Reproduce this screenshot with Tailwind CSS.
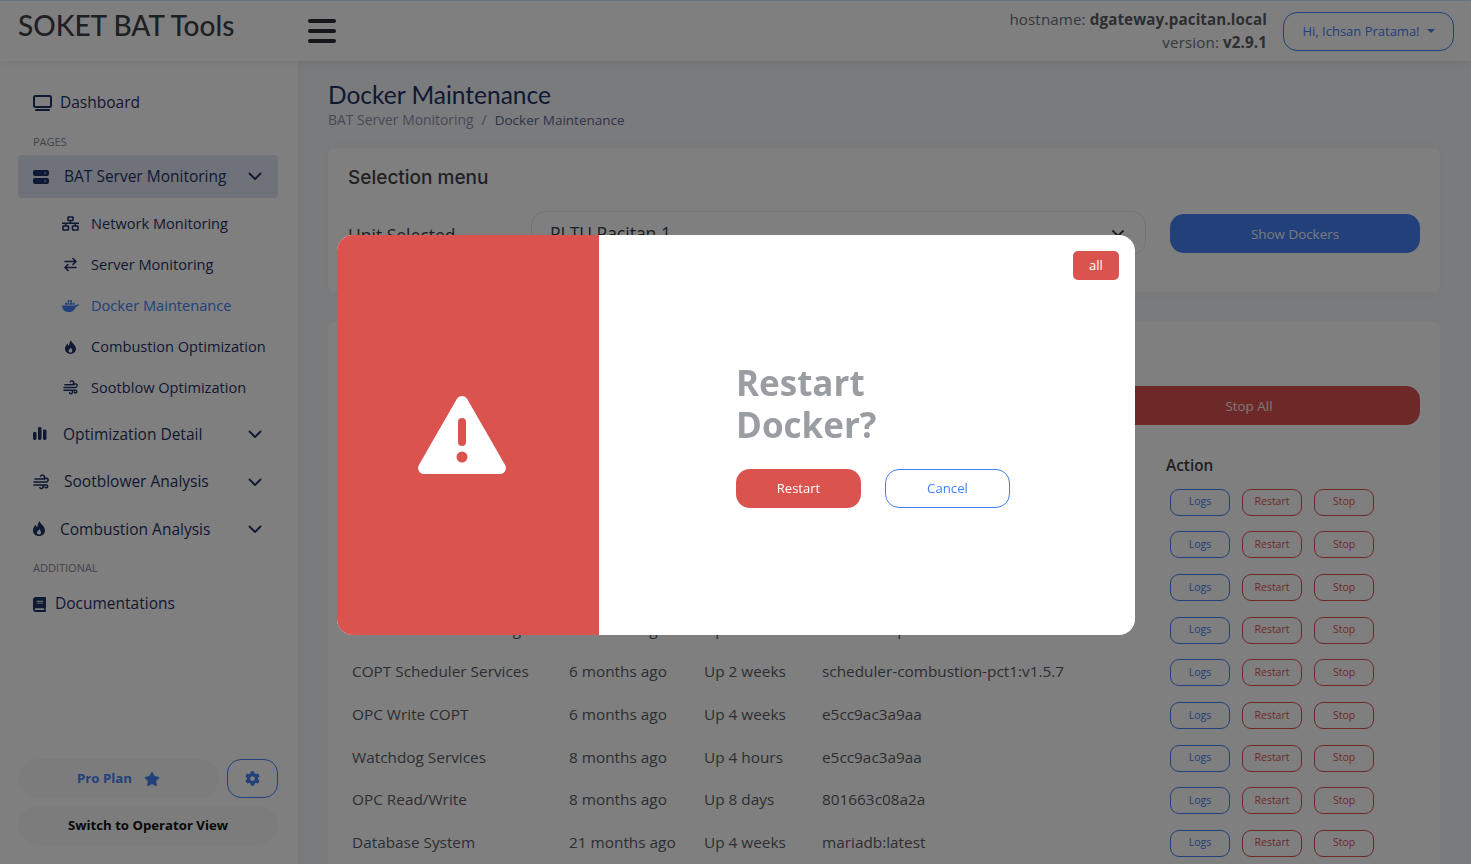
<!doctype html>
<html>
<head>
<meta charset="utf-8">
<script src="https://cdn.jsdelivr.net/npm/@tailwindcss/browser@4"></script>
<title>Docker Maintenance</title>
</head>
<body class="font-['Open_Sans',sans-serif] bg-[#f4f6fa] text-[#3a3b45]">
<div class="h-[864px] w-[1471px] overflow-hidden flex flex-col">
  <header class="h-[61px] shrink-0 bg-white border-t border-[#d7e6f5] flex items-center shadow-[0_2px_10px_rgba(0,0,0,0.08)] relative z-10">
    <div class="w-[298px] pl-[18px] font-['Lato',sans-serif] text-[28px] font-medium text-[#3f4146] leading-none pb-[12px]">SOKET BAT Tools</div>
    <button class="w-[28px] ml-[10px] flex flex-col gap-[6px] -mt-[1px]">
      <span class="h-[4px] rounded bg-[#2b2d33] block"></span>
      <span class="h-[4px] rounded bg-[#2b2d33] block"></span>
      <span class="h-[4px] rounded bg-[#2b2d33] block"></span>
    </button>
    <div class="ml-auto text-right text-[15.200px] leading-[23px] text-[#6d7077] -mt-[1px] tracking-[0.1px]">
      <div>hostname: <b class="font-bold text-[#5a5c63]">dgateway.pacitan.local</b></div>
      <div>version: <b class="font-bold text-[#5a5c63]">v2.9.1</b></div>
    </div>
    <button class="ml-[16px] mr-[17px] w-[171px] h-[39px] border border-[#4480f4] rounded-[14px] text-[#4480f4] text-[13px] flex items-center justify-center gap-[7px] mt-[1px] pt-[1px]">
      Hi, Ichsan Pratama!
      <span class="w-0 h-0 border-x-[4px] border-x-transparent border-t-[4px] border-t-[#4480f4] -mt-[3px]"></span>
    </button>
  </header>

  <div class="flex flex-1 min-h-0">
    <aside class="w-[298px] shrink-0 bg-white pl-[18px] pr-[20px] flex flex-col text-[#1f3266] shadow-[2px_0_8px_rgba(0,0,0,0.04)]">
      <a class="mt-[28px] h-[28px] pl-[15px] flex items-center gap-[8px] text-[15.500px]">
        <svg class="w-[19px] h-[16px]" viewBox="0 0 19 16" fill="none"><rect x="1" y="1" width="17" height="11" rx="1.500" stroke="#1f3266" stroke-width="2"/><path d="M3 15h13" stroke="#1f3266" stroke-width="2" stroke-linecap="round"/></svg>
        Dashboard
      </a>
      <div class="mt-[17px] h-[16px] pl-[15px] text-[11px] leading-[16px] text-[#858796] font-medium">PAGES</div>
      <a class="mt-[5px] h-[43px] rounded-[4px] bg-[#dfe6f3] pl-[15px] pr-[16px] flex items-center text-[15.500px]">
        <svg class="w-[16px] h-[14px] mr-[15px]" viewBox="0 0 16 14" fill="#1f3266"><path fill-rule="evenodd" d="M2 0h12a2 2 0 0 1 2 2v2a2 2 0 0 1-2 2H2a2 2 0 0 1-2-2V2a2 2 0 0 1 2-2zm0 8h12a2 2 0 0 1 2 2v2a2 2 0 0 1-2 2H2a2 2 0 0 1-2-2v-2a2 2 0 0 1 2-2zm10-5.800a.8.8 0 1 0 0 1.600.8.8 0 0 0 0-1.600zm0 8a.8.8 0 1 0 0 1.600.8.8 0 0 0 0-1.600z"/></svg>
        BAT Server Monitoring
        <svg class="ml-auto w-[14px] h-[9px]" viewBox="0 0 14 9" fill="none"><path d="M1.500 1.500L7 7l5.500-5.500" stroke="#1f3266" stroke-width="1.800" stroke-linecap="round" stroke-linejoin="round"/></svg>
      </a>
      <div class="text-[14.600px] mt-[5px]">
        <a class="h-[41px] flex items-center pl-[44px] gap-[12px]">
          <svg class="w-[17px] h-[15px]" viewBox="0 0 17 15" fill="none" stroke="#1f3266" stroke-width="1.600"><rect x="6" y="1" width="5" height="3.500" rx=".5"/><rect x="1" y="10" width="5.500" height="4" rx=".5"/><rect x="10.500" y="10" width="5.500" height="4" rx=".5"/><path d="M0 7.200h17M8.500 4.500v2.700M3.700 7.200v2.800M13.300 7.200v2.800"/></svg>
          Network Monitoring
        </a>
        <a class="h-[41px] flex items-center pl-[45px] gap-[12px]">
          <svg class="w-[15px] h-[15px] mr-[1px]" viewBox="0 0 15 15" fill="none" stroke="#1f3266" stroke-width="1.600" stroke-linecap="round" stroke-linejoin="round"><path d="M2 4.500h11M10 1.500l3 3-3 3M13 10.500H2M5 7.500l-3 3 3 3"/></svg>
          Server Monitoring
        </a>
        <a class="h-[41px] flex items-center pl-[44px] gap-[12px] text-[#4480f4] font-medium">
          <svg class="w-[17px] h-[13px]" viewBox="0 0 17 13" fill="#4480f4"><path d="M0 6.500h13.400c.4-.9 1.600-1.300 3.600-.9-.5 1.500-1.700 2.100-3 2.100-1 2.900-3.300 5.300-7.500 5.300C2.600 13 .3 10.500 0 6.500z"/><path d="M3 3.700h2v2H3zM5.500 3.700h2v2h-2zM8 3.700h2v2H8zM5.500 1.200h2v2h-2zM8 1.200h2v2H8zM10.500 3.700h2v2h-2z"/></svg>
          Docker Maintenance
        </a>
        <a class="h-[41px] flex items-center pl-[47px] gap-[15px]">
          <svg class="w-[11px] h-[14px]" viewBox="0 0 12 15" fill="#1f3266"><path fill-rule="evenodd" d="M6.500 0C6.800 2.800 12 5 12 9.500 12 12.800 9.300 15 6 15S0 12.800 0 9.500C0 7 1.500 5 2.800 3.800 3 5 3.500 6 4.300 6.500 4.500 4 5.200 1.800 6.500 0zM6.500 7.800C6.300 9.200 4 10 4 11.800 4 13 4.900 13.500 6 13.500S8 13 8 11.500C8 10 6.800 9.200 6.500 7.800z"/></svg>
          Combustion Optimization
        </a>
        <a class="h-[41px] flex items-center pl-[45px] gap-[13px]">
          <svg class="w-[15px] h-[15px]" viewBox="0 0 16 15" fill="none" stroke="#1f3266" stroke-width="1.500" stroke-linecap="round"><path d="M2 4.500H9.500a2 2 0 1 0-1.800-2.900M1 7.500H13.200a1.900 1.900 0 1 0-1.700-2.700M1 10.500H8.500a1.800 1.800 0 1 1-1.600 2.700M10.500 10.500h2.800a1.400 1.400 0 1 1-1.300 1.900"/></svg>
          Sootblow Optimization
        </a>
      </div>
      <a class="mt-[3px] h-[47px] pl-[15px] pr-[16px] flex items-center text-[15.500px]">
        <svg class="w-[14px] h-[13px] mr-[16px] -mt-[2px]" viewBox="0 0 14 13" fill="#1f3266"><rect x="0" y="5" width="3.500" height="8" rx="1.400"/><rect x="5" y="0" width="3.500" height="13" rx="1.400"/><rect x="10" y="2.500" width="3.500" height="10.500" rx="1.400"/></svg>
        Optimization Detail
        <svg class="ml-auto w-[14px] h-[9px]" viewBox="0 0 14 9" fill="none"><path d="M1.500 1.500L7 7l5.500-5.500" stroke="#1f3266" stroke-width="1.800" stroke-linecap="round" stroke-linejoin="round"/></svg>
      </a>
      <a class="h-[48px] pl-[15px] pr-[16px] flex items-center text-[15.500px]">
        <svg class="w-[16px] h-[16px] mr-[15px]" viewBox="0 0 16 15" fill="none" stroke="#1f3266" stroke-width="1.500" stroke-linecap="round"><path d="M2 4.500H9.500a2 2 0 1 0-1.800-2.900M1 7.500H13.200a1.900 1.900 0 1 0-1.700-2.700M1 10.500H8.500a1.800 1.800 0 1 1-1.600 2.700M10.500 10.500h2.800a1.400 1.400 0 1 1-1.300 1.900"/></svg>
        Sootblower Analysis
        <svg class="ml-auto w-[14px] h-[9px]" viewBox="0 0 14 9" fill="none"><path d="M1.500 1.500L7 7l5.500-5.500" stroke="#1f3266" stroke-width="1.800" stroke-linecap="round" stroke-linejoin="round"/></svg>
      </a>
      <a class="h-[47px] pl-[15px] pr-[16px] flex items-center text-[15.500px]">
        <svg class="w-[12px] h-[15px] mr-[15px] -mt-[2px]" viewBox="0 0 12 15" fill="#1f3266"><path fill-rule="evenodd" d="M6.500 0C6.800 2.800 12 5 12 9.500 12 12.800 9.300 15 6 15S0 12.800 0 9.500C0 7 1.500 5 2.800 3.800 3 5 3.500 6 4.300 6.500 4.500 4 5.200 1.800 6.500 0zM6.500 7.800C6.300 9.200 4 10 4 11.800 4 13 4.900 13.500 6 13.500S8 13 8 11.500C8 10 6.800 9.200 6.500 7.800z"/></svg>
        Combustion Analysis
        <svg class="ml-auto w-[14px] h-[9px]" viewBox="0 0 14 9" fill="none"><path d="M1.500 1.500L7 7l5.500-5.500" stroke="#1f3266" stroke-width="1.800" stroke-linecap="round" stroke-linejoin="round"/></svg>
      </a>
      <div class="mt-[7px] h-[16px] pl-[15px] text-[11px] leading-[16px] text-[#858796] font-medium">ADDITIONAL</div>
      <a class="mt-[14px] h-[28px] pl-[15px] flex items-center gap-[9px] text-[15.500px]">
        <svg class="w-[13px] h-[15px]" viewBox="0 0 448 512" fill="#1f3266"><path d="M448 360V24c0-13.300-10.700-24-24-24H96C43 0 0 43 0 96v320c0 53 43 96 96 96h328c13.300 0 24-10.700 24-24v-16c0-7.500-3.500-14.300-8.900-18.700-4.200-15.400-4.200-59.300 0-74.700 5.400-4.300 8.900-11.100 8.900-18.600zM128 134c0-3.300 2.700-6 6-6h212c3.300 0 6 2.700 6 6v20c0 3.300-2.700 6-6 6H134c-3.300 0-6-2.700-6-6v-20zm0 64c0-3.300 2.700-6 6-6h212c3.300 0 6 2.700 6 6v20c0 3.300-2.700 6-6 6H134c-3.300 0-6-2.700-6-6v-20zm253.400 250H96c-17.700 0-32-14.300-32-32 0-17.600 14.400-32 32-32h285.400c-1.900 17.100-1.900 46.900 0 64z"/></svg>
        Documentations
      </a>
      <div class="mt-auto mb-[19px] flex flex-col gap-[8px]">
        <div class="flex gap-[8px]">
          <div class="h-[39px] w-[201px] rounded-[20px] bg-[#f8f9fb] flex items-center justify-center gap-[12px] text-[13.200px] font-bold text-[#4480f4] pt-[1px]">
            Pro Plan
            <svg class="w-[16px] h-[14px]" viewBox="0 0 576 512" fill="#4480f4"><path d="M259.3 17.800L194 150.200 47.900 171.500c-26.200 3.800-36.700 36.100-17.700 54.600l105.700 103-25 145.500c-4.500 26.300 23.200 46 46.400 33.700L288 439.600l130.700 68.700c23.200 12.200 50.900-7.400 46.400-33.700l-25-145.500 105.700-103c19-18.500 8.500-50.800-17.700-54.600L382 150.200 316.700 17.800c-11.700-23.600-45.600-23.900-57.400 0z"/></svg>
          </div>
          <button class="w-[51px] h-[39px] rounded-[14px] border border-[#4480f4] flex items-center justify-center">
            <svg class="w-[15px] h-[15px]" viewBox="0 0 512 512" fill="#4480f4"><path d="M487.4 315.700l-42.600-24.600c4.300-23.200 4.300-47 0-70.200l42.600-24.600c4.900-2.800 7.100-8.600 5.500-14-11.100-35.600-30-67.800-54.700-94.600-3.800-4.100-10-5.100-14.800-2.300L380.800 110c-17.900-15.400-38.500-27.300-60.800-35.100V25.800c0-5.600-3.900-10.500-9.400-11.700-36.700-8.200-74.300-7.800-109.200 0-5.500 1.200-9.400 6.100-9.400 11.700V75c-22.200 7.900-42.800 19.800-60.800 35.100L88.700 85.500c-4.900-2.800-11-1.900-14.800 2.300-24.700 26.700-43.600 58.900-54.700 94.600-1.700 5.400.6 11.200 5.500 14L67.300 221c-4.300 23.200-4.300 47 0 70.200l-42.600 24.600c-4.900 2.800-7.100 8.600-5.500 14 11.100 35.600 30 67.800 54.700 94.600 3.800 4.100 10 5.100 14.800 2.300l42.600-24.600c17.900 15.400 38.500 27.300 60.800 35.100v49.200c0 5.600 3.900 10.500 9.400 11.700 36.700 8.200 74.300 7.800 109.200 0 5.500-1.200 9.400-6.100 9.400-11.700v-49.200c22.200-7.900 42.800-19.800 60.800-35.100l42.600 24.600c4.900 2.800 11 1.900 14.800-2.300 24.700-26.700 43.600-58.900 54.700-94.600 1.500-5.500-.7-11.300-5.600-14.100zM256 336c-44.100 0-80-35.900-80-80s35.900-80 80-80 80 35.900 80 80-35.900 80-80 80z"/></svg>
          </button>
        </div>
        <div class="h-[39px] rounded-[20px] bg-[#f8f9fb] flex items-center justify-center text-[13.200px] font-bold text-[#101010] pt-[1px]">Switch to Operator View</div>
      </div>
    </aside>

    <main class="flex-1 min-w-0 pl-[30px] pr-[31px]">
      <h1 class="mt-[19px] font-['Lato',sans-serif] text-[24.500px] leading-[30px] text-[#1f3266] font-normal">Docker Maintenance</h1>
      <div class="text-[13.900px] leading-[20px] flex gap-[8px] text-[#8a94ad]">
        <span class="text-[#8a94ad]">BAT Server Monitoring</span><span>/</span><span class="text-[13.500px] text-[#5c6a94]">Docker Maintenance</span>
      </div>
      <section class="mt-[18px] h-[144px] bg-white rounded-[6px] px-[20px] pt-[18px] shadow-[0_0_12px_rgba(0,0,0,0.03)]">
        <h2 class="font-['Inter',sans-serif] text-[19px] leading-[24px] font-medium text-[#3f4146]">Selection menu</h2>
        <div class="mt-[21px] flex items-start">
          <label class="w-[183px] pt-[14px] text-[17.500px] leading-[20px]">Unit Selected</label>
          <div class="w-[615px] h-[44px] border border-[#e3e6ec] rounded-[14px] pl-[18px] pr-[20px] flex items-center justify-between text-[17.500px]">
            PLTU Pacitan 1
            <svg class="w-[14px] h-[9px]" viewBox="0 0 14 9" fill="none"><path d="M1.500 1.500L7 7l5.500-5.500" stroke="#3a3b45" stroke-width="1.800"/></svg>
          </div>
          <button class="ml-[24px] mt-[3px] w-[250px] h-[39px] rounded-[14px] bg-[#4480f4] text-white/90 text-[13.400px] pt-[1px]">Show Dockers</button>
        </div>
      </section>
      <section class="mt-[30px] bg-white rounded-[6px] px-[20px] pt-[27px] h-[600px]">
        <h2 class="font-['Inter',sans-serif] text-[19px] leading-[24px] font-medium text-[#3f4146]">Docker List</h2>
        <div class="mt-[13px] grid grid-cols-3 gap-[23px]">
          <button class="h-[39px] rounded-[14px] bg-[#4480f4] text-white text-[13.400px] pt-[1px]">Logs All</button>
          <button class="h-[39px] rounded-[14px] bg-[#da534f] text-white text-[13.400px] pt-[1px]">Restart All</button>
          <button class="h-[39px] rounded-[14px] bg-[#da534f] text-white/90 text-[13.400px] pt-[1px]">Stop All</button>
        </div>
        <div class="mt-[29px] grid grid-cols-[217px_135px_118px_344px_1fr] pl-[4px] h-[24px] items-center font-semibold text-[15.400px] text-[#3f4146]">
          <div>Name</div><div>Created</div><div>Status</div><div>Image</div><div>Action</div>
        </div>
        <div class="mt-[2px] text-[15.350px] text-[#5a5c63]">
          <div class="grid grid-cols-[217px_135px_118px_344px_1fr] pl-[4px] h-[42.625px] items-center"><div>Gateway Services</div><div>2 months ago</div><div>Up 4 weeks</div><div>gateway:v2.9.1</div><div class="flex gap-[12px] mt-[2px] ml-[4px]"><button class="w-[60px] h-[27px] rounded-[9px] border border-[#4480f4] text-[#4480f4] text-[10.500px]">Logs</button><button class="w-[60px] h-[27px] rounded-[9px] border border-[#da534f] text-[#da534f] text-[10.500px]">Restart</button><button class="w-[60px] h-[27px] rounded-[9px] border border-[#da534f] text-[#da534f] text-[10.500px]">Stop</button></div></div>
          <div class="grid grid-cols-[217px_135px_118px_344px_1fr] pl-[4px] h-[42.625px] items-center"><div>Frontend Services</div><div>3 months ago</div><div>Up 4 weeks</div><div>frontend:v2.9.1</div><div class="flex gap-[12px] mt-[2px] ml-[4px]"><button class="w-[60px] h-[27px] rounded-[9px] border border-[#4480f4] text-[#4480f4] text-[10.500px]">Logs</button><button class="w-[60px] h-[27px] rounded-[9px] border border-[#da534f] text-[#da534f] text-[10.500px]">Restart</button><button class="w-[60px] h-[27px] rounded-[9px] border border-[#da534f] text-[#da534f] text-[10.500px]">Stop</button></div></div>
          <div class="grid grid-cols-[217px_135px_118px_344px_1fr] pl-[4px] h-[42.625px] items-center"><div>Backend Services</div><div>3 months ago</div><div>Up 4 weeks</div><div>backend:v2.9.1</div><div class="flex gap-[12px] mt-[2px] ml-[4px]"><button class="w-[60px] h-[27px] rounded-[9px] border border-[#4480f4] text-[#4480f4] text-[10.500px]">Logs</button><button class="w-[60px] h-[27px] rounded-[9px] border border-[#da534f] text-[#da534f] text-[10.500px]">Restart</button><button class="w-[60px] h-[27px] rounded-[9px] border border-[#da534f] text-[#da534f] text-[10.500px]">Stop</button></div></div>
          <div class="grid grid-cols-[217px_135px_118px_344px_1fr] pl-[4px] h-[42.625px] items-center"><div>COPT Model Processing</div><div>6 months ago</div><div>Up 2 weeks</div><div>scheduler-pct1:v1.5.7</div><div class="flex gap-[12px] mt-[2px] ml-[4px]"><button class="w-[60px] h-[27px] rounded-[9px] border border-[#4480f4] text-[#4480f4] text-[10.500px]">Logs</button><button class="w-[60px] h-[27px] rounded-[9px] border border-[#da534f] text-[#da534f] text-[10.500px]">Restart</button><button class="w-[60px] h-[27px] rounded-[9px] border border-[#da534f] text-[#da534f] text-[10.500px]">Stop</button></div></div>
          <div class="grid grid-cols-[217px_135px_118px_344px_1fr] pl-[4px] h-[42.625px] items-center"><div>COPT Scheduler Services</div><div>6 months ago</div><div>Up 2 weeks</div><div>scheduler-combustion-pct1:v1.5.7</div><div class="flex gap-[12px] mt-[2px] ml-[4px]"><button class="w-[60px] h-[27px] rounded-[9px] border border-[#4480f4] text-[#4480f4] text-[10.500px]">Logs</button><button class="w-[60px] h-[27px] rounded-[9px] border border-[#da534f] text-[#da534f] text-[10.500px]">Restart</button><button class="w-[60px] h-[27px] rounded-[9px] border border-[#da534f] text-[#da534f] text-[10.500px]">Stop</button></div></div>
          <div class="grid grid-cols-[217px_135px_118px_344px_1fr] pl-[4px] h-[42.625px] items-center"><div>OPC Write COPT</div><div>6 months ago</div><div>Up 4 weeks</div><div>e5cc9ac3a9aa</div><div class="flex gap-[12px] mt-[2px] ml-[4px]"><button class="w-[60px] h-[27px] rounded-[9px] border border-[#4480f4] text-[#4480f4] text-[10.500px]">Logs</button><button class="w-[60px] h-[27px] rounded-[9px] border border-[#da534f] text-[#da534f] text-[10.500px]">Restart</button><button class="w-[60px] h-[27px] rounded-[9px] border border-[#da534f] text-[#da534f] text-[10.500px]">Stop</button></div></div>
          <div class="grid grid-cols-[217px_135px_118px_344px_1fr] pl-[4px] h-[42.625px] items-center"><div>Watchdog Services</div><div>8 months ago</div><div>Up 4 hours</div><div>e5cc9ac3a9aa</div><div class="flex gap-[12px] mt-[2px] ml-[4px]"><button class="w-[60px] h-[27px] rounded-[9px] border border-[#4480f4] text-[#4480f4] text-[10.500px]">Logs</button><button class="w-[60px] h-[27px] rounded-[9px] border border-[#da534f] text-[#da534f] text-[10.500px]">Restart</button><button class="w-[60px] h-[27px] rounded-[9px] border border-[#da534f] text-[#da534f] text-[10.500px]">Stop</button></div></div>
          <div class="grid grid-cols-[217px_135px_118px_344px_1fr] pl-[4px] h-[42.625px] items-center"><div>OPC Read/Write</div><div>8 months ago</div><div>Up 8 days</div><div>801663c08a2a</div><div class="flex gap-[12px] mt-[2px] ml-[4px]"><button class="w-[60px] h-[27px] rounded-[9px] border border-[#4480f4] text-[#4480f4] text-[10.500px]">Logs</button><button class="w-[60px] h-[27px] rounded-[9px] border border-[#da534f] text-[#da534f] text-[10.500px]">Restart</button><button class="w-[60px] h-[27px] rounded-[9px] border border-[#da534f] text-[#da534f] text-[10.500px]">Stop</button></div></div>
          <div class="grid grid-cols-[217px_135px_118px_344px_1fr] pl-[4px] h-[42.625px] items-center"><div>Database System</div><div>21 months ago</div><div>Up 4 weeks</div><div>mariadb:latest</div><div class="flex gap-[12px] mt-[2px] ml-[4px]"><button class="w-[60px] h-[27px] rounded-[9px] border border-[#4480f4] text-[#4480f4] text-[10.500px]">Logs</button><button class="w-[60px] h-[27px] rounded-[9px] border border-[#da534f] text-[#da534f] text-[10.500px]">Restart</button><button class="w-[60px] h-[27px] rounded-[9px] border border-[#da534f] text-[#da534f] text-[10.500px]">Stop</button></div></div>
        </div>
      </section>
    </main>
  </div>
</div>

<div class="fixed inset-0 z-20 bg-black/50 flex justify-center pt-[235px] pl-[1px]">
  <div class="w-[798px] h-[400px] rounded-[16px] overflow-hidden bg-white flex relative">
    <div class="w-[262px] bg-[#da534f] flex items-center justify-center">
      <svg class="w-[88px] h-[78px] -mt-[1px] -ml-[12px]" viewBox="0 0 88 78"><path fill="#fff" d="M38.800 3c2.300-4 8.100-4 10.400 0l37.900 65.900c2.300 4-.6 9.100-5.200 9.100H6.100c-4.600 0-7.500-5.100-5.200-9.100z"/><rect x="40" y="22" width="8" height="28" rx="4" fill="#da534f"/><circle cx="44" cy="61" r="5.500" fill="#da534f"/></svg>
    </div>
    <div class="flex-1 pl-[137px] flex flex-col justify-center">
      <div class="w-[200px] text-[35px] leading-[42px] font-bold text-[#9a9da1]">Restart Docker?</div>
      <div class="mt-[23px] flex gap-[24px]">
        <button class="w-[125px] h-[39px] rounded-[14px] bg-[#da534f] text-white text-[13px] pt-[1px]">Restart</button>
        <button class="w-[125px] h-[39px] rounded-[14px] border border-[#4480f4] text-[#4480f4] text-[13.200px] pt-[1px]">Cancel</button>
      </div>
    </div>
    <span class="absolute top-[16px] right-[16px] w-[46px] h-[29px] rounded-[5px] bg-[#da534f] text-white text-[13px] flex items-center justify-center">all</span>
  </div>
</div>
</body>
</html>
